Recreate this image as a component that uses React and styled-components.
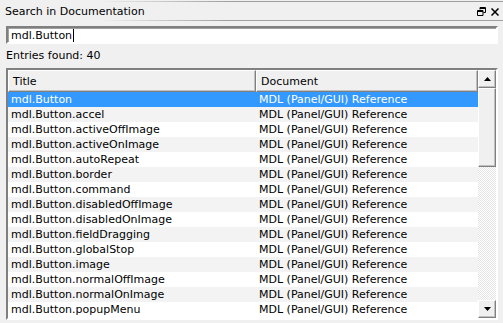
import * as React from "react"
import styled, { createGlobalStyle } from 'styled-components'

const GlobalStyle = createGlobalStyle`
    html, body {
        margin: 0;
        padding: 0;
        background: #f0f0f0;
    }
    body {
        font-family: Tahoma, "DejaVu Sans", "Liberation Sans", sans-serif;
        font-size: 11px;
        color: #000000;
    }
`;

const Panel = styled.div`
    width: 503px;
    height: 323px;
    display: flex;
    flex-direction: column;
    background: #f0f0f0;
    overflow: hidden;
`;

const TitleBar = styled.div`
    height: 22px;
    flex-shrink: 0;
    display: flex;
    align-items: center;
    justify-content: space-between;
    padding: 0 4px 0 5px;
    box-sizing: border-box;
    position: relative;

    &::before, &::after {
        content: '';
        position: absolute;
        left: 0;
        right: 0;
        height: 1px;
        background: linear-gradient(to right, rgba(160,160,160,0) 20%, #a0a0a0 45%);
    }
    &::before { top: 1px; }
    &::after { bottom: 1px; }
`;

const Title = styled.span`
    font-size: 11px;
    margin-top: 1px;
`;

const TitleIcons = styled.div`
    display: flex;
    align-items: center;
    gap: 5px;
    margin-top: 1px;
`;

const Body = styled.div`
    flex: 1;
    min-height: 0;
    display: flex;
    flex-direction: column;
    padding: 4px 5px 3px 6px;
`;

const SearchBox = styled.div`
    height: 18px;
    flex-shrink: 0;
    box-sizing: border-box;
    background: #ffffff;
    border: 2px solid;
    border-color: #808080 #ffffff #ffffff #808080;
    box-shadow: inset 1px 1px 0 #a0a0a0;
    display: flex;
    align-items: center;
    padding-left: 3px;
`;

const Caret = styled.span`
    display: inline-block;
    width: 1px;
    height: 13px;
    background: #000;
    margin-left: 1px;
`;

const Status = styled.div`
    height: 22px;
    flex-shrink: 0;
    display: flex;
    align-items: center;
    margin-bottom: 2px;
`;

const ListFrame = styled.div`
    flex: 1;
    min-height: 0;
    display: flex;
    border: 2px solid;
    border-color: #808080 #ffffff #ffffff #808080;
    overflow: hidden;
`;

const Table = styled.div`
    flex: 1;
    display: flex;
    flex-direction: column;
    background: #ffffff;
    overflow: hidden;
`;

const HeaderRow = styled.div`
    display: grid;
    grid-template-columns: 248px 1fr;
    height: 22px;
    flex-shrink: 0;
`;

const HeaderCell = styled.div`
    background: #f0f0f0;
    border: 1px solid;
    border-color: #ffffff #808080 #808080 #ffffff;
    box-shadow: inset -1px -1px 0 #c0c0c0;
    display: flex;
    align-items: center;
    padding-left: 4px;
`;

const Row = styled.div`
    display: grid;
    grid-template-columns: 248px 1fr;
    height: 15px;
    align-items: center;
    flex-shrink: 0;
    background: ${({ selected, odd }) => selected ? '#3399ff' : odd ? '#f3f3f3' : '#ffffff'};
    color: ${({ selected }) => selected ? '#ffffff' : '#000000'};
`;

const Cell = styled.div`
    padding-left: 3px;
    white-space: nowrap;
    overflow: hidden;
`;

const ScrollBar = styled.div`
    width: 18px;
    flex-shrink: 0;
    display: flex;
    flex-direction: column;
    background-color: #f4f4f4;
    background-image: repeating-conic-gradient(#ffffff 0 25%, #e4e4e4 0 50%);
    background-size: 2px 2px;
`;

const ScrollButton = styled.div`
    height: 18px;
    flex-shrink: 0;
    box-sizing: border-box;
    background: #f0f0f0;
    border: 1px solid;
    border-color: #ffffff #808080 #808080 #ffffff;
    box-shadow: inset -1px -1px 0 #c0c0c0;
    display: flex;
    align-items: center;
    justify-content: center;
`;

const Thumb = styled.div`
    height: 79px;
    flex-shrink: 0;
    box-sizing: border-box;
    background: #f0f0f0;
    border: 1px solid;
    border-color: #ffffff #808080 #808080 #ffffff;
    box-shadow: inset -1px -1px 0 #c0c0c0;
`;

const Track = styled.div`
    flex: 1;
`;

const entries = [
    'mdl.Button',
    'mdl.Button.accel',
    'mdl.Button.activeOffImage',
    'mdl.Button.activeOnImage',
    'mdl.Button.autoRepeat',
    'mdl.Button.border',
    'mdl.Button.command',
    'mdl.Button.disabledOffImage',
    'mdl.Button.disabledOnImage',
    'mdl.Button.fieldDragging',
    'mdl.Button.globalStop',
    'mdl.Button.image',
    'mdl.Button.normalOffImage',
    'mdl.Button.normalOnImage',
    'mdl.Button.popupMenu',
];

const RestoreIcon = () => (
    <svg width="9" height="9" viewBox="0 0 9 9">
        <path d="M3 0.5h5.5v5h-2 M3 0.5v2 M3 1.5h5.5" fill="none" stroke="#000" strokeWidth="1" />
        <path d="M0.5 3.5h5.5v5h-5.5z M0.5 4.5h5.5" fill="none" stroke="#000" strokeWidth="1" />
    </svg>
);

const CloseIcon = () => (
    <svg width="8" height="8" viewBox="0 0 8 8">
        <path d="M0.5 0.5L7.5 7.5M7.5 0.5L0.5 7.5" stroke="#000" strokeWidth="1.5" />
    </svg>
);

const Arrow = ({ down }) => (
    <svg width="7" height="4" viewBox="0 0 7 4">
        <path d={down ? 'M0 0h7L3.5 4z' : 'M0 4h7L3.5 0z'} fill="#000" />
    </svg>
);

const App = () => {
    return (
        <Panel>
            <GlobalStyle />
            <TitleBar>
                <Title>Search in Documentation</Title>
                <TitleIcons>
                    <RestoreIcon />
                    <CloseIcon />
                </TitleIcons>
            </TitleBar>
            <Body>
                <SearchBox>mdl.Button<Caret /></SearchBox>
                <Status>Entries found: 40</Status>
                <ListFrame>
                    <Table>
                        <HeaderRow>
                            <HeaderCell>Title</HeaderCell>
                            <HeaderCell>Document</HeaderCell>
                        </HeaderRow>
                        {entries.map((name, i) => (
                            <Row key={name} selected={i === 0} odd={i % 2 === 1}>
                                <Cell>{name}</Cell>
                                <Cell>MDL (Panel/GUI) Reference</Cell>
                            </Row>
                        ))}
                    </Table>
                    <ScrollBar>
                        <ScrollButton><Arrow /></ScrollButton>
                        <Thumb />
                        <Track />
                        <ScrollButton><Arrow down /></ScrollButton>
                    </ScrollBar>
                </ListFrame>
            </Body>
        </Panel>
    );
}

export default App
